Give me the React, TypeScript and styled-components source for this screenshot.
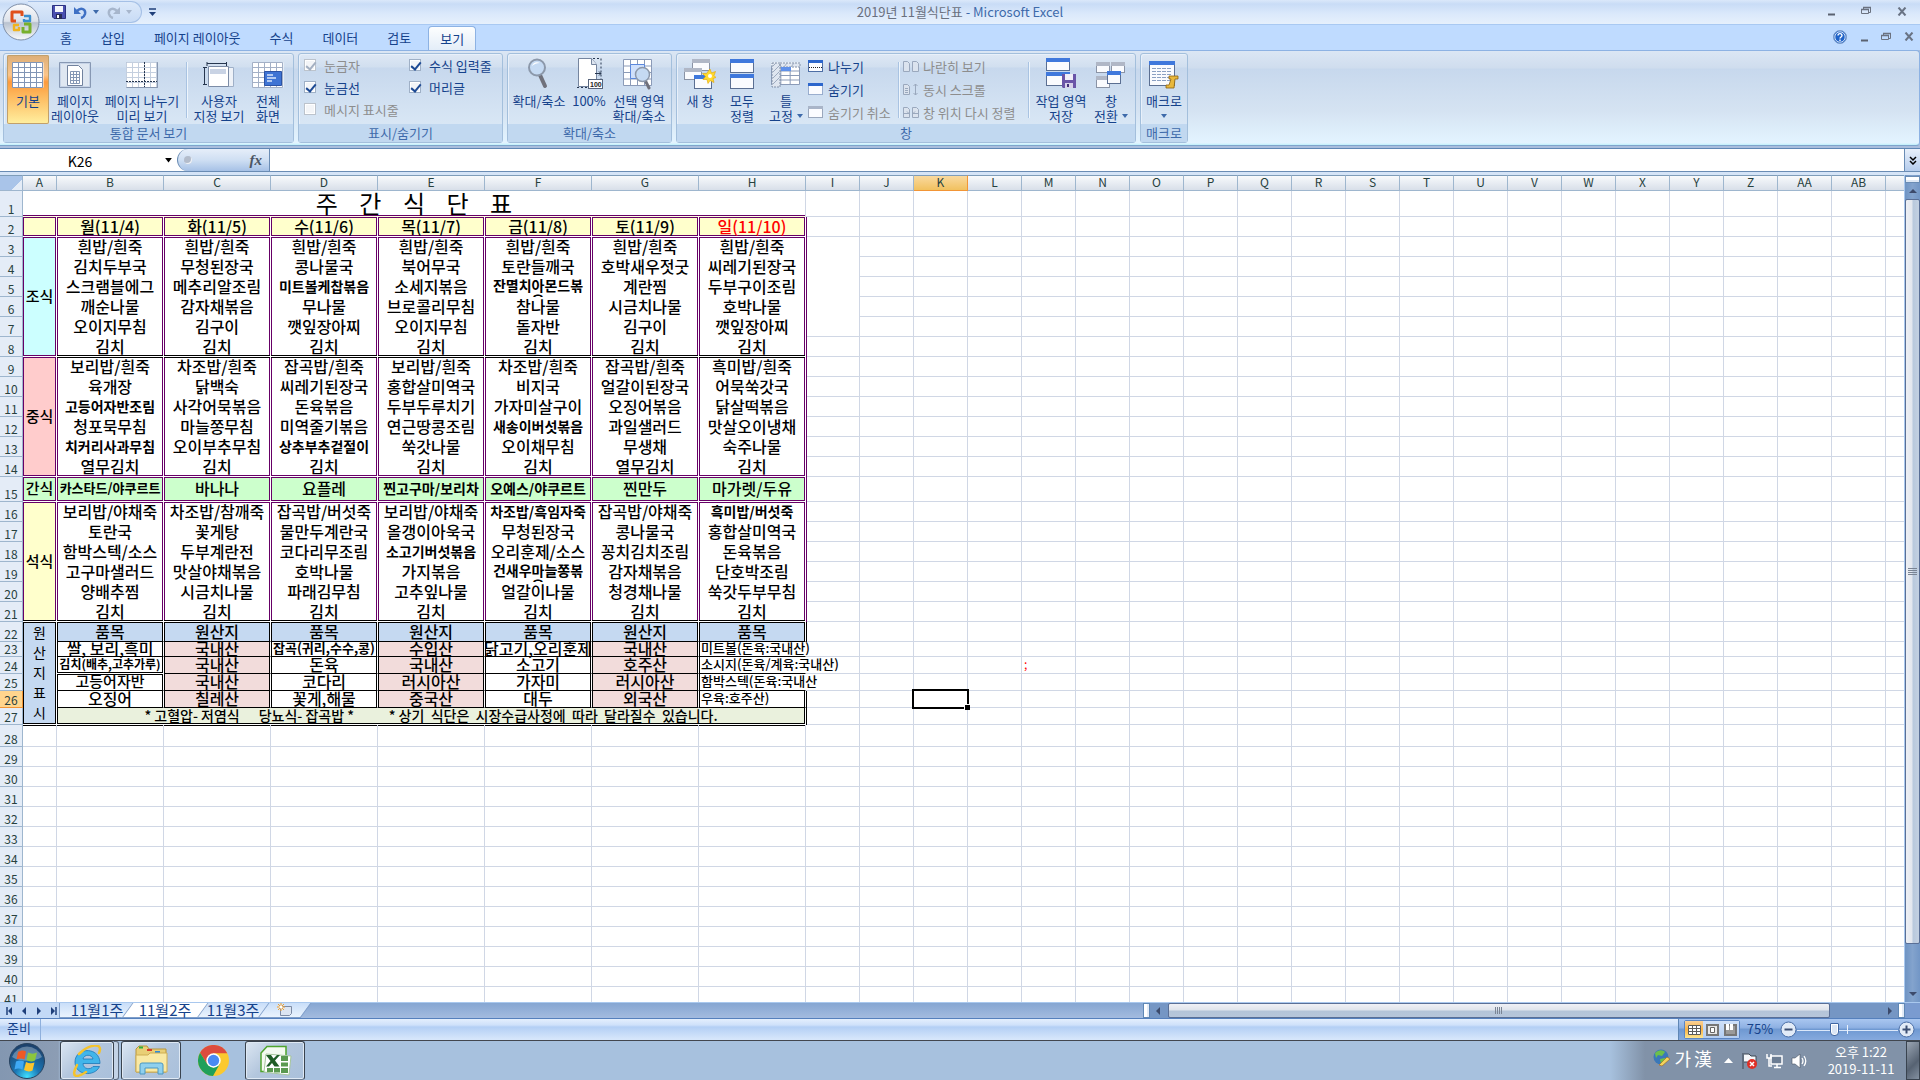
import React from "react";
import styled, { createGlobalStyle, css } from "styled-components";

const UI = '"Noto Sans CJK KR", "Noto Sans", sans-serif';
const PURPLE = "#660066";
const BLACK = "#000000";
const GRID = "#d0d7e5";

const Global = createGlobalStyle`
  * { box-sizing: border-box; }
  body { margin: 0; overflow: hidden; background: #fff; }
  button, input { font-family: inherit; font-size: inherit; color: inherit; margin: 0; padding: 0; border: 0; background: none; }
  svg { display: block; flex: none; }
`;

const Window = styled.div`
  display: flex;
  flex-direction: column;
  height: 100vh;
  font-family: ${UI};
  font-size: 13px;
  line-height: 15px;
  color: #15428b;
  position: relative;
`;

/* ---------- title bar ---------- */
const TitleBar = styled.header`
  flex: none;
  height: 25px;
  display: grid;
  grid-template-columns: 1fr auto 1fr;
  align-items: center;
  background: linear-gradient(#dbe8fa 0, #c9dcf6 4px, #dbe9fb 14px, #e6f0fc 24px);
  border-bottom: 1px solid #a9c9f2;
`;
const QuickAccess = styled.div`
  display: flex;
  align-items: center;
  padding-left: 28px;
`;
const QuickPill = styled.div`
  display: flex;
  align-items: center;
  gap: 8px;
  height: 22px;
  width: 114px;
  padding-left: 24px;
  border: 1px solid #a5c0e6;
  border-left: 0;
  border-radius: 0 11px 11px 0;
  background: linear-gradient(#dce9fa, #c8dbf5);
`;
const QuickButton = styled.button`
  display: flex;
  align-items: center;
  gap: 6px;
`;
const QuickMore = styled(QuickButton)`
  margin-left: 7px;
`;
const Title = styled.h1`
  margin: 0;
  font-size: 13px;
  font-weight: 400;
  line-height: 22px;
  color: #69707e;
  span { color: #3e6aaa; }
`;
const WindowButtons = styled.div<{ $gap: number; $end: number }>`
  display: flex;
  justify-content: flex-end;
  align-items: center;
  align-self: center;
  gap: ${(p) => p.$gap}px;
  padding-right: ${(p) => p.$end}px;
  padding-bottom: 2px;
  margin-left: auto;
`;
const OfficeButton = styled.button`
  position: absolute;
  left: 2px;
  top: 3px;
  width: 38px;
  height: 38px;
  z-index: 2;
`;

/* ---------- ribbon ---------- */
const TabBar = styled.nav`
  flex: none;
  height: 25px;
  display: flex;
  align-items: flex-end;
  padding-left: 45px;
  background: #bfdbff;
`;
const Tab = styled.button<{ $active?: boolean }>`
  height: 24px;
  padding: 0 12px;
  margin: 0 2px 0 3px;
  line-height: 22px;
  ${(p) =>
    p.$active &&
    css`
      background: linear-gradient(#fdfefe, #e3edf8);
      border: 1px solid #8db2e3;
      border-bottom: 0;
      border-radius: 4px 4px 0 0;
      padding: 0 11px;
    `}
`;
const Ribbon = styled.section`
  flex: none;
  height: 98px;
  padding-bottom: 2px;
  background: #a9bedd;
`;
const RibbonPanel = styled.div`
  display: flex;
  gap: 4px;
  height: 96px;
  padding: 2px 3px;
  border: 1px solid #8db2e3;
  border-left: 0;
  border-bottom-color: #7fa5cc;
  border-radius: 0 4px 4px 0;
  background: linear-gradient(#dbe6f4 0, #cfddee 17px, #c7d8ed 18px, #d5e3f2 60px, #e3f4ff 92px, #bdf0fa 94px);
`;
const Group = styled.section<{ $w: number }>`
  flex: none;
  width: ${(p) => p.$w}px;
  height: 90px;
  display: flex;
  flex-direction: column;
  border: 1px solid #a3bfdc;
  border-radius: 3px;
  background: linear-gradient(#dee8f5 0, #d1dfef 13px, #c7d8ed 14px, #d9e7f5 72px);
  box-shadow: inset 1px 1px #e8f0fa;
`;
const GroupBody = styled.div`
  flex: 1;
  display: flex;
  padding: 1px 3px 0;
`;
const GroupTitle = styled.h2`
  margin: 0;
  height: 18px;
  font-size: 13px;
  line-height: 18px;
  font-weight: 400;
  text-align: center;
  color: #3e6aaa;
  background: #c1d8f0;
`;
const BigButton = styled.button<{ $w: number; $active?: boolean }>`
  flex: none;
  width: ${(p) => p.$w}px;
  height: 69px;
  display: flex;
  flex-direction: column;
  align-items: center;
  white-space: nowrap;
  line-height: 15px;
  padding-top: 2px;
  ${(p) =>
    p.$active &&
    css`
      background: linear-gradient(#dcae78 0, #fbc58a 20px, #fd9a3c 27px, #fdb75c 40px, #fff0a0 69px);
      box-shadow: inset 0 0 0 1px #c2a06b;
      border-radius: 2px;
    `}
`;
const IconBox = styled.span`
  height: 36px;
  display: flex;
  align-items: center;
  justify-content: center;
`;
const Line = styled.span`
  display: flex;
  align-items: center;
  gap: 4px;
  min-height: 15px;
`;
const Divider = styled.span`
  flex: none;
  width: 2px;
  height: 56px;
  margin: 7px 3px 0;
  background: #a9c3e2;
  border-right: 1px solid #eef5fc;
`;
const CheckGrid = styled.div`
  display: grid;
  grid-template-columns: 105px auto;
  grid-auto-rows: 22px;
  align-content: start;
  padding: 0 2px;
`;
const CheckLabel = styled.label<{ $off?: boolean }>`
  display: flex;
  align-items: center;
  gap: 8px;
  height: 20px;
  white-space: nowrap;
  color: ${(p) => (p.$off ? "#8d8d8d" : "#15428b")};
`;
const CheckBox = styled.input`
  appearance: none;
  width: 12px;
  height: 12px;
  border: 1px solid #9fb0c6;
  background: #f3f5f8;
  box-shadow: inset 0 0 0 1px #ffffff;
  position: relative;
  &:checked::after {
    content: "";
    position: absolute;
    left: 3px;
    top: 0;
    width: 4px;
    height: 8px;
    border: solid #1d4a94;
    border-width: 0 2px 2px 0;
    transform: rotate(40deg);
  }
  &:disabled { border-color: #bcc3cc; }
  &:disabled::after { border-color: #a4b0c2; }
`;
const SmallStack = styled.div<{ $w: number }>`
  flex: none;
  width: ${(p) => p.$w}px;
  display: grid;
  grid-auto-rows: 23px;
  align-content: start;
`;
const SmallButton = styled.button<{ $off?: boolean }>`
  display: flex;
  align-items: center;
  gap: 4px;
  white-space: nowrap;
  color: ${(p) => (p.$off ? "#8d8d8d" : "#15428b")};
`;

/* ---------- formula bar ---------- */
const FormulaBar = styled.section`
  flex: none;
  height: 27px;
  display: flex;
  background: #fff;
  border-top: 1px solid #5f87b5;
  border-bottom: 3px solid #d5e4f7;
  box-shadow: inset 0 -1px #6a8cb4;
`;
const NameBox = styled.input`
  width: 160px;
  text-align: center;
  color: #000;
  font-size: 14px;
`;
const NameArrow = styled.button`
  width: 17px;
  display: flex;
  align-items: center;
  justify-content: center;
`;
const FxCapsule = styled.button`
  width: 93px;
  margin-bottom: 1px;
  display: flex;
  align-items: center;
  justify-content: space-between;
  padding: 0 7px 0 6px;
  border-left: 1px solid #6a8cb4;
  border-right: 1px solid #6a8cb4;
  border-radius: 12px 0 0 12px;
  background: linear-gradient(#e6eef9, #cfdff3 50%, #a6c1e6);
`;
const Dot = styled.span`
  width: 8px;
  height: 8px;
  border-radius: 50%;
  background: #b3bccb;
  box-shadow: inset -1px -1px #eef2f8;
`;
const Fx = styled.i`
  font-family: "Liberation Serif", serif;
  font-size: 15px;
  font-weight: 700;
  color: #4c5563;
`;
const FormulaInput = styled.input`
  flex: 1;
  min-width: 0;
`;
const ExpandButton = styled.button`
  width: 16px;
  margin-bottom: 1px;
  border-left: 1px solid #6a8cb4;
  background: linear-gradient(#e8f0fb, #b5ccec);
  display: flex;
  align-items: center;
  justify-content: center;
`;

/* ---------- sheet ---------- */
const Work = styled.main`
  flex: 1;
  min-height: 0;
  display: flex;
`;
const SheetView = styled.div`
  flex: 1;
  min-width: 0;
  overflow: hidden;
  background: #fff;
`;
const Sheet = styled.table`
  table-layout: fixed;
  width: 1px;
  border-collapse: separate;
  border-spacing: 0;
  color: #000;
`;
const ColHead = styled.th<{ $on?: boolean }>`
  height: 16px;
  padding: 0 0 2px;
  font-size: 12px;
  font-weight: 400;
  line-height: 12px;
  color: #27413e;
  background: ${(p) => (p.$on ? "linear-gradient(#f9d99f, #f1c15f)" : "linear-gradient(#f8fafc, #d8dfe9)")};
  border-top: 1px solid #7f9db9;
  border-right: 1px solid ${(p) => (p.$on ? "#f29536" : "#9eb6ce")};
  border-bottom: 1px solid ${(p) => (p.$on ? "#f29536" : "#9eb6ce")};
`;
const Corner = styled(ColHead)`
  background: linear-gradient(135deg, #a9c4e9 70%, #e4ecf7 71%);
`;
const RowHead = styled.th<{ $on?: boolean }>`
  padding: 0 0 1px;
  font-size: 12px;
  font-weight: 400;
  line-height: 13px;
  vertical-align: bottom;
  color: #27413e;
  background: ${(p) => (p.$on ? "#ffd58d" : "#e4ecf7")};
  border-right: 1px solid ${(p) => (p.$on ? "#f29536" : "#9eb6ce")};
  border-bottom: 1px solid ${(p) => (p.$on ? "#f29536" : "#9eb6ce")};
`;

type Edges = { t?: string; r?: string; b?: string; l?: string };
const shadow = (e: Edges = {}) =>
  [
    e.t && `inset 0 1px ${e.t}`,
    e.b && `inset 0 -1px ${e.b}`,
    e.l && `inset 1px 0 ${e.l}`,
    e.r && `inset -1px 0 ${e.r}`,
  ]
    .filter(Boolean)
    .join(",") || "none";

const Cell = styled.td<{ $edges?: Edges; $bg?: string; $right?: string; $bottom?: string; $rail?: string }>`
  padding: 0;
  position: relative;
  background: ${(p) => p.$bg || "transparent"};
  background-clip: padding-box;
  border-right: 1px solid ${(p) => p.$right || GRID};
  border-bottom: ${(p) => (p.$bottom === "none" ? "0" : `1px solid ${p.$bottom || GRID}`)};
  box-shadow: ${(p) => shadow(p.$edges)};
  ${(p) =>
    p.$rail &&
    css`
      &::before {
        content: "";
        position: absolute;
        top: 0;
        bottom: -1px;
        left: 0;
        width: 1px;
        background: ${p.$rail};
      }
    `}
`;
const CellText = styled.div<{ $h: number; $size?: number; $weight?: number; $color?: string; $kind?: "wrap" | "spill" | "clip" }>`
  height: ${(p) => p.$h}px;
  padding-bottom: 2px;
  display: flex;
  align-items: center;
  justify-content: center;
  white-space: pre;
  font-size: ${(p) => p.$size || 16}px;
  font-weight: ${(p) => p.$weight || 500};
  line-height: 14px;
  color: ${(p) => p.$color || "#000"};
  ${(p) => p.$kind === "clip" && css`overflow-x: clip;`}
  ${(p) =>
    p.$kind === "wrap" &&
    css`
      overflow: hidden;
      align-items: flex-start;
      white-space: normal;
      word-break: break-all;
      text-align: center;
      line-height: 15px;
      padding: 0 6px;
    `}
  ${(p) =>
    p.$kind === "spill" &&
    css`
      justify-content: flex-start;
      width: 0;
      padding-left: 2px;
    `}
`;
const SideText = styled.div<{ $size: number; $weight: number; $lh: number }>`
  padding-bottom: 2px;
  font-size: ${(p) => p.$size}px;
  font-weight: ${(p) => p.$weight};
  line-height: ${(p) => p.$lh}px;
  text-align: center;
  white-space: pre;
`;
const Selection = styled.div`
  position: absolute;
  inset: -2px;
  border: 2px solid #000;
  z-index: 1;
  &::after {
    content: "";
    position: absolute;
    right: -3px;
    bottom: -3px;
    width: 5px;
    height: 5px;
    background: #000;
    border: solid #fff;
    border-width: 1px 0 0 1px;
  }
`;

/* ---------- scroll bars ---------- */
const VScroll = styled.aside`
  flex: none;
  width: 16px;
  display: flex;
  flex-direction: column;
  background: linear-gradient(90deg, #6f94c4, #83a3cd 50%, #7296c6);
  border-left: 1px solid #a9c8ee;
`;
const SplitV = styled.span`
  height: 7px;
  margin-top: 1px;
  background: #fff;
  border: 1px solid #6a8cb4;
  box-shadow: inset 0 -2px #dfe9f6;
`;
const ArrowButton = styled.button`
  flex: none;
  width: 16px;
  height: 16px;
  display: flex;
  align-items: center;
  justify-content: center;
`;
const VTrack = styled.div`
  flex: 1;
  display: grid;
  grid-template-rows: 742fr 42fr;
`;
const VThumb = styled.div`
  border: 1px solid #5a6f96;
  border-radius: 2px;
  background: linear-gradient(90deg, #eef0f4, #e2e6ee 48%, #b8c8dc 52%, #c4d1e2);
  display: flex;
  align-items: center;
  justify-content: center;
`;
const SheetBar = styled.footer`
  flex: none;
  height: 16px;
  display: flex;
  background: linear-gradient(#86a6d2, #a3bbdf);
  border-top: 1px solid #a9c8ee;
`;
const NavArrows = styled.div`
  width: 63px;
  display: flex;
  align-items: center;
  justify-content: space-around;
  padding: 0 3px;
  background: #c3d9f6;
`;
const SheetTabs = styled.div`
  display: flex;
`;
const SheetTab = styled.button<{ $active?: boolean; $w: number }>`
  position: relative;
  width: ${(p) => p.$w}px;
  height: 15px;
  padding-bottom: 2px;
  font-size: 15px;
  line-height: 13px;
  color: #15428b;
  display: flex;
  align-items: center;
  justify-content: center;
  z-index: ${(p) => (p.$active ? 1 : 0)};
  isolation: isolate;
  &::before {
    content: "";
    position: absolute;
    inset: 0 -4px 0 -4px;
    z-index: -1;
    transform: skewX(-36deg);
    background: ${(p) => (p.$active ? "#fff" : "linear-gradient(#c9def9, #eaf3fd)")};
    border: solid #7f9ec9;
    border-width: 0 1px 1px 1px;
  }
  &:first-child::before { transform: none; }
`;
const HScroll = styled.div`
  margin-left: auto;
  width: 762px;
  display: flex;
  background: #7596c4;
`;
const SplitH = styled.span`
  width: 7px;
  border: 1px solid #5f87b5;
  background: #fff;
  box-shadow: inset -2px 0 #e3ebf7;
`;
const HTrack = styled.div`
  flex: 1;
  display: grid;
  grid-template-columns: 660fr 52fr;
  padding-left: 2px;
`;
const HThumb = styled.div`
  border: 1px solid #5a6f96;
  border-radius: 2px;
  background: linear-gradient(#f0f1f5, #dfe4ec 45%, #b4c4d8 55%, #b7c6da);
  display: flex;
  align-items: center;
  justify-content: center;
`;
const BarEnd = styled.span`
  width: 15px;
  background: #7a9bd0;
`;

/* ---------- status bar ---------- */
const StatusBar = styled.footer`
  flex: none;
  height: 22px;
  display: flex;
  align-items: stretch;
  border-top: 1px solid #5580bd;
  background: linear-gradient(#e4effd 0, #cfe1fa 6px, #b3cff5 8px, #d6e6fb 20px);
`;
const Ready = styled.span`
  width: 41px;
  padding-left: 7px;
  line-height: 18px;
  border-right: 1px solid #8fb0dd;
`;
const StatusTools = styled.div`
  margin-left: auto;
  display: flex;
  align-items: center;
  width: 242px;
  padding-left: 5px;
  border-left: 1px solid #5f87b5;
  background: linear-gradient(#a9c6f0, #8fb1e3 40%, #6f99d2 50%, #86aade);
`;
const Views = styled.div`
  display: flex;
  border: 1px solid #5c86c4;
  border-radius: 2px;
`;
const ViewButton = styled.button<{ $on?: boolean }>`
  width: 18px;
  height: 17px;
  display: flex;
  align-items: center;
  justify-content: center;
  background: ${(p) => (p.$on ? "linear-gradient(#f9d199, #fbb344 50%, #fde58f)" : "linear-gradient(#cfe0f8, #b4cef2)")};
`;
const Percent = styled.span`
  width: 40px;
  padding-bottom: 2px;
  text-align: center;
  font-size: 13px;
`;
const ZoomButton = styled.button`
  flex: none;
  width: 17px;
  height: 17px;
`;
const ZoomRange = styled.input`
  appearance: none;
  flex: none;
  width: 101px;
  height: 16px;
  background: linear-gradient(#e9f1fc, #e9f1fc) 50% 3px / 1px 9px no-repeat, linear-gradient(#dbe8fa, #dbe8fa) 0 8px / 100% 1px no-repeat;
  &::-webkit-slider-thumb {
    appearance: none;
    width: 9px;
    height: 13px;
    background: #dbe6f5;
    border: 1px solid #3f66a3;
    border-radius: 1px 1px 4px 4px;
    box-shadow: inset 0 0 0 1px #fff;
  }
`;

/* ---------- task bar ---------- */
const TaskBar = styled.footer`
  flex: none;
  height: 40px;
  display: flex;
  align-items: stretch;
  border-top: 1px solid #42474f;
  background: linear-gradient(90deg, #8397b1, #8c9db4 58px, #a7c1de 62px, #a7c1de calc(100% - 310px), #8192a8 calc(100% - 275px));
`;
const TaskButton = styled.button<{ $w: number; $open?: boolean; $gap?: number }>`
  width: ${(p) => p.$w}px;
  margin-left: ${(p) => p.$gap || 0}px;
  display: flex;
  align-items: center;
  justify-content: center;
  ${(p) =>
    p.$open &&
    css`
      border: 1px solid #39434f;
      border-bottom-color: #6e7f95;
      border-radius: 3px;
      background: linear-gradient(135deg, #dbe6f2, #b3c6dd 45%, #a9c0db);
      box-shadow: inset 0 0 0 1px #dfe9f4;
    `}
`;
const StackEdge = styled.span`
  width: 5px;
  border: 1px solid #5c6a7c;
  border-left: 0;
  border-radius: 0 3px 3px 0;
  background: #c3d3e6;
`;
const Tray = styled.div`
  margin-left: auto;
  display: flex;
  align-items: center;
  gap: 8px;
  color: #fff;
`;
const Ime = styled.span`
  display: flex;
  align-items: center;
  gap: 3px;
  font-size: 18px;
  padding-right: 4px;
  padding-bottom: 5px;
`;
const Clock = styled.time`
  width: 90px;
  text-align: center;
  font-size: 13px;
  line-height: 17px;
  padding-bottom: 1px;
`;
const ShowDesktop = styled.button`
  width: 14px;
  align-self: stretch;
  margin-left: -8px;
  border: 1px solid #39434f;
  background: linear-gradient(135deg, #9aa5b3, #566272 60%, #8491a1);
`;

/* ---------- icons ---------- */
const Caret = ({ c = "#3e6aaa", w = 6 }: { c?: string; w?: number }) => (
  <svg width={w} height={w / 2 + 1} viewBox="0 0 6 4"><path d="M0 0h6L3 4z" fill={c} /></svg>
);
const Tri = ({ dir, c = "#1f3f7a", bar }: { dir: number; c?: string; bar?: boolean }) => (
  <svg width="8" height="8" viewBox="0 0 8 8">
    <g transform={`rotate(${dir} 4 4)`}><path d="M2 0v8l4-4z" fill={c} />{bar && <path d="M7 0v8" stroke={c} strokeWidth="1.5" />}</g>
  </svg>
);
const MinIcon = () => <svg width="8" height="10"><path d="M1 8.5h7" stroke="#5b6270" strokeWidth="2" /></svg>;
const RestoreIcon = () => (
  <svg width="10" height="10" fill="none" stroke="#6b7280"><path d="M2.5 3V1.5h7v5H8" /><path d="M.5 3.5h7v4h-7z" /><path d="M2 1.5h8M0 3.5h8" strokeWidth="1.5" /></svg>
);
const CloseIcon = () => <svg width="10" height="9"><path d="M1.500 .5l7 8M8.500 .5l-7 8" stroke="#697384" strokeWidth="2" /></svg>;

const OfficeLogo = () => (
  <svg width="38" height="38" viewBox="0 0 38 38">
    <defs>
      <linearGradient id="orb" x1="0" y1="0" x2="0" y2="1">
        <stop offset="0" stopColor="#fafbfd" /><stop offset=".48" stopColor="#dde2ea" /><stop offset=".52" stopColor="#b9c2cf" /><stop offset="1" stopColor="#f8fafc" />
      </linearGradient>
    </defs>
    <circle cx="19" cy="19" r="18" fill="url(#orb)" stroke="#7f8fa8" />
    <g fill="none" strokeWidth="3" strokeLinejoin="round">
      <path d="M16 9h-6v9h4M13 9h7v4" stroke="#e0501c" />
      <path d="M22 13h6v5h-4M22 16v2h2" stroke="#3a8fd0" strokeWidth="2.400" />
      <path d="M17 22h-5v5h5v-3" stroke="#f0b31e" strokeWidth="2.400" />
      <path d="M22 21h6v8h-7v-5" stroke="#78b02c" />
    </g>
  </svg>
);
const SaveIcon = () => (
  <svg width="14" height="14"><path d="M.5 .5h13v13H2L.5 12z" fill="#4a4fb0" stroke="#2c3182" /><path d="M3 1h8v6H3z" fill="#f3f5fb" /><path d="M4 9h6v5H4z" fill="#262a55" /><path d="M5 10h2v3H5z" fill="#fff" /></svg>
);
const UndoIcon = ({ off }: { off?: boolean }) => (
  <svg width="13" height="13" viewBox="0 0 13 13">
    <g transform={off ? "translate(13 0) scale(-1 1)" : undefined}>
      <path d="M3 5c4-4 9-2 8 3-.5 2-2 3.500-4 4" fill="none" stroke={off ? "#a7b6cc" : "#3f70c4"} strokeWidth="2.500" />
      <path d="M0 1v7h7z" fill={off ? "#a7b6cc" : "#3f70c4"} />
    </g>
  </svg>
);
const HelpIcon = () => (
  <svg width="14" height="14"><circle cx="7" cy="7" r="6.500" fill="#1e62c8" stroke="#7d9dc9" /><circle cx="7" cy="7" r="5.200" fill="none" stroke="#fff" strokeWidth=".8" /><path d="M5 5.500c0-2.500 4-2.500 4 0C9 7 7 7 7 8.500M7 9.500v1.500" stroke="#fff" strokeWidth="1.400" fill="none" /></svg>
);
const lines = (x0: number, y0: number, x1: number, y1: number, sx: number, sy: number) => {
  let d = "";
  for (let x = x0; x <= x1; x += sx) d += `M${x} ${y0}V${y1}`;
  for (let y = y0; y <= y1; y += sy) d += `M${x0} ${y}H${x1}`;
  return d;
};
const NormalIcon = () => (
  <svg width="32" height="27"><path d="M.5 .5h31v25H.5z" fill="#fff" /><path d={lines(0.5, 0.5, 30.5, 25.5, 6, 5)} stroke="#8195b5" fill="none" /></svg>
);
const PageLayoutIcon = () => (
  <svg width="32" height="27"><path d="M.5 .5h31v25H.5z" fill="#c6d3e6" stroke="#8798b3" /><path d="M2 2h28v22H2z" fill="#dfe7f1" /><path d="M8.500 3.500h11l4 4v16h-15z" fill="#fff" stroke="#71829e" /><path d={lines(11.5, 9.5, 20.5, 21.5, 3, 3)} stroke="#8497b4" fill="none" /></svg>
);
const PageBreakIcon = () => (
  <svg width="32" height="27"><path d="M.5 .5h31v25H.5z" fill="#fff" stroke="#8797b0" /><path d={lines(0.5, 0.5, 30.5, 25.5, 6, 5)} stroke="#c4cfdf" fill="none" /><path d="M18.500 0v26M0 19.500h32" stroke="#26364f" strokeDasharray="2 1" /><path d="M.5 25.500h31v-25" stroke="#8797b0" fill="none" /></svg>
);
const CustomIcon = () => (
  <svg width="32" height="27"><path d="M8.500 5.500h22v19h-22z" fill="#eef2f8" stroke="#9fb0c8" /><path d="M5.500 4.500h20v20h-20z" fill="#fff" stroke="#7c8ca6" /><path d="M7 7h16v5H7z" fill="#c9d3e4" /><path d="M4 1.500h20M4 0v4M23.500 0v4M1.500 5v18M0 5.500h4M0 22.500h4" stroke="#26364f" fill="none" /></svg>
);
const FullIcon = () => (
  <svg width="32" height="27"><path d="M.5 .5h31v25H.5z" fill="#fff" /><path d={lines(0.5, 0.5, 30.5, 25.5, 6, 5)} stroke="#a3b0c6" fill="none" /><path d="M12.500 9.500h17v14h-17z" fill="#3f74d4" stroke="#2c53a5" /><path d="M15 13h6M15 16h9M15 19h5" stroke="#dce8fb" strokeWidth="1.500" /></svg>
);
const Lens = () => (
  <svg width="24" height="34" viewBox="0 0 24 34"><path d="M13 17l5 11" stroke="#70717b" strokeWidth="4" strokeLinecap="round" /><circle cx="10" cy="9.500" r="8" fill="#c5daf3" stroke="#8c98aa" strokeWidth="2" /><path d="M5 8c1-3 4-5 8-3-3 0-6 1-8 3z" fill="#fff" /></svg>
);
const HundredIcon = () => (
  <svg width="27" height="34"><path d="M2.500 .5h13l5 6v22h-18z" fill="#fff" stroke="#75859f" /><path d="M15.500 .5v6h5" fill="#dde5f0" stroke="#75859f" /><path d="M17 .5h8v27M1 29.500h12" stroke="#26364f" strokeDasharray="2 2" fill="none" /><path d="M19 15.500h6l-2-2m2 2l-2 2" stroke="#26364f" fill="none" /><rect x="12.500" y="21.500" width="14" height="9" fill="#fff" stroke="#56647c" /><text x="14" y="29" fontSize="7" fontWeight="700" fontFamily="Liberation Sans, sans-serif" fill="#222">100</text></svg>
);
const SelZoomIcon = () => (
  <svg width="32" height="33"><path d="M.5 .5h28v26H.5z" fill="#fff" /><path d={lines(0.5, 0.5, 28.5, 26.5, 7, 6.5)} stroke="#8b9bb8" fill="none" /><path d="M7.500 5.500h14v14h-14z" fill="#cfe0fb" stroke="#5b88dd" /><path d="M22 21l4 8" stroke="#70717b" strokeWidth="3" strokeLinecap="round" /><circle cx="19.500" cy="15.500" r="7" fill="#c5daf3" stroke="#8c98aa" strokeWidth="1.500" /></svg>
);
const Win = ({ x, y, w, h, off }: { x: number; y: number; w: number; h: number; off?: boolean }) => (
  <g><rect x={x + 0.5} y={y + 0.5} width={w} height={h} fill="#fafbfe" stroke={off ? "#8a93a5" : "#5b6f92"} /><rect x={x} y={y} width={w + 1} height="4" fill={off ? "#b0b7c6" : "#3f78dc"} /></g>
);
const NewWinIcon = () => (
  <svg width="32" height="33"><Win x={8} y={0} w={17} h={11} off /><Win x={0} y={9} w={17} h={11} off /><Win x={10} y={16} w={17} h={13} /><path d="M26 10l1.500 4 4-1.500-1.500 4 2 2-3 1 1 4-4-2-2 3-1-4-4 0 2.500-3-3-3 4 0z" fill="#ffd92e" stroke="#e3a500" strokeWidth=".6" /><circle cx="26" cy="17" r="2" fill="#fff" /></svg>
);
const ArrangeIcon = () => <svg width="25" height="33"><Win x={0} y={0} w={23} h={13} /><Win x={0} y={15} w={23} h={14} /></svg>;
const FreezeIcon = () => (
  <svg width="30" height="27"><path d="M.5 .5h28v22H.5z" fill="#fff" /><path d={lines(0.5, 4.5, 28.5, 22.5, 9.33, 4.5)} stroke="#8b9bb8" fill="none" /><path d="M1 1h8v24H1zM9 1h20v4H9z" fill="#dfe6f0" stroke="#8090a8" strokeDasharray="2 1" /><path d="M10 5h10v4H10z" fill="#5e90ea" /><path d="M2 4l3-3M2 10l6-6M2 16l6-6M2 22l6-6M13 5l3-4M20 5l3-4" stroke="#9dabc0" /></svg>
);
const SaveAreaIcon = () => (
  <svg width="31" height="34"><Win x={0} y={0} w={23} h={12} /><Win x={0} y={14} w={23} h={13} /><path d="M16 16h14v14H17l-1-1z" fill="#6a55a8" /><path d="M19 16h8v6h-8z" fill="#f1eef8" /><path d="M19 25h8v5h-8z" fill="#d8d2ea" /><path d="M21 26h2v3h-2z" fill="#41307a" /></svg>
);
const SwitchIcon = () => (
  <svg width="30" height="27"><Win x={0} y={0} w={13} h={10} off /><Win x={15} y={0} w={13} h={10} off /><Win x={0} y={14} w={13} h={11} off /><Win x={11} y={9} w={13} h={12} /></svg>
);
const MacroIcon = () => (
  <svg width="30" height="29"><Win x={0} y={0} w={25} h={24} /><path d="M3 7.500h19M3 10.500h19M3 13.500h19M3 16.500h19M3 19.500h19" stroke="#8ba0c2" strokeDasharray="4 1" /><path d="M20 15h9v3h-3l-1 9h-8v-3h3l2-6h-2z" fill="#e8b83c" stroke="#8d6310" strokeWidth=".8" /></svg>
);
const MiniWin = ({ kind }: { kind: "split" | "hide" | "off" }) => (
  <svg width="16" height="13"><rect x=".5" y=".5" width="14" height="11" fill="#fbfcff" stroke={kind === "off" ? "#9aa7bc" : "#4e6ea5"} strokeDasharray={kind === "hide" ? "1 1" : undefined} /><rect width="15" height="3" fill={kind === "off" ? "#a9b5c8" : "#2c66cc"} />{kind === "split" && <path d="M1 7.500h13" stroke="#222" strokeDasharray="1 1" />}</svg>
);
const PairIcon = ({ kind }: { kind: "pair" | "sync" | "reset" }) => (
  <svg width="16" height="13" fill="#dbe3ee" stroke="#9aa8bd">
    <path d="M.5 1.500h4l2 2v8h-6z" />
    {kind !== "sync" ? <path d="M9.500 1.500h4l2 2v8h-6z" /> : <path d="M12.500 1v11M10.500 3l2-2 2 2M10.500 10l2 2 2-2" fill="none" />}
    {kind === "sync" && <path d="M2 5.500h3M2 7.500h3M2 9.500h3" />}
    {kind === "reset" && <path d="M1 7.500h5l-2-2M15 7.500h-5l2-2" fill="none" />}
  </svg>
);
const NewSheetIcon = () => (
  <svg width="16" height="13"><path d="M3.500 3.500h11v7l-2 2h-9z" fill="#dce5f2" stroke="#7d8ba5" /><path d="M4 0v8M0 4h8M1 1l6 6M7 1L1 7" stroke="#f2a02a" /><circle cx="4" cy="4" r="1.500" fill="#fff" /></svg>
);
const StartOrb = () => (
  <svg width="38" height="38" viewBox="0 0 38 38">
    <defs><radialGradient id="start" cx=".5" cy=".95" r=".9"><stop offset="0" stopColor="#40e0ff" /><stop offset=".4" stopColor="#1b76b4" /><stop offset="1" stopColor="#1c416c" /></radialGradient></defs>
    <circle cx="19" cy="19" r="17.500" fill="url(#start)" stroke="#27425f" />
    <path d="M4 15a16 16 0 0 1 30 0c-8 5-22 5-30 0z" fill="#fff" opacity=".3" />
    <path d="M10 10c3-2 6-2 8-.5l-1.500 8c-3-1.500-5-1.500-8 0z" fill="#ee5a24" />
    <path d="M20 10.500c3 1.500 6 1.500 9 0l-2 8c-3 1.500-6 1-8.500-.5z" fill="#8cc63e" />
    <path d="M8 19.500c3-1.500 5-1.500 8 0l-1.500 8c-3-1.500-5-1.500-8 0z" fill="#3fa9f5" />
    <path d="M18 20c3 1.500 5.500 1.500 8.500.5l-2 8c-3 1.500-5.500 1-8.500-.5z" fill="#fcc52c" />
  </svg>
);
const IeIcon = () => (
  <svg width="32" height="32" viewBox="0 0 32 32">
    <path d="M29 18.500H12c0 6 8 6.500 10 3h6.500C24 32 4 31 4 17 4 2 29 1 29 18.500zM12 14h10c-1-5-9-5-10 0z" fill="#41b5ea" stroke="#1c77b8" strokeWidth=".8" />
    <path d="M6 20C-1 33 6 33 15 27M8 9C18-1 33-3 28 8" fill="none" stroke="#f5c32c" strokeWidth="2.500" strokeLinecap="round" />
  </svg>
);
const FolderIcon = () => (
  <svg width="33" height="31" viewBox="0 0 33 31"><path d="M1 4l3-3h8l2 3h17v23H1z" fill="#e9cf76" stroke="#b8953a" /><path d="M4 2.500h4" stroke="#2fae3c" strokeWidth="2" /><path d="M12 5h5" stroke="#d83a2b" strokeWidth="2" /><path d="M20 7h5" stroke="#2f8bd8" strokeWidth="2" /><path d="M1 10h12l2-2h17v19H1z" fill="#f9e9a4" stroke="#cfae54" /><path d="M5 29v-9q0-2 2-2h19q2 0 2 2v9h-5v-6H10v6z" fill="#8fd0ee" stroke="#4a97c2" /></svg>
);
const ChromeIcon = () => (
  <svg width="31" height="31" viewBox="-15 -15 30 30"><circle r="15" fill="#fbc92f" /><path d="M0-7H13.300A15 15 0 0 0-13-7.500L-6.100 3.500z" fill="#dd4b3e" /><path d="M-13-7.500A15 15 0 0 0-.5 15L6.100 3.500 0 7-6.100 3.500z" fill="#1fa05a" /><circle r="7" fill="#fff" /><circle r="5.500" fill="#4a8af4" /></svg>
);
const ExcelIcon = () => (
  <svg width="33" height="32" viewBox="0 0 33 32"><path d="M8 1.500h19v25H2V8z" fill="#f4faf0" stroke="#4fa52e" strokeWidth="1.500" /><path d="M7 9l25 2-2 19-25-3z" fill="#fff" stroke="#a6c69c" /><path d="M22 11h7v5h-7zM22 17.500h7v4h-7zM8 23h6v4H8zM15 23h6v4.500h-6zM22 23h7v5h-7z" fill="#5a9950" /><path d="M7 10h5l2.500 3.500L18 10h3l-5 5.500 4.500 6h-5L13 18l-3 3.500H7l4.500-5.500z" fill="#1f5c26" /></svg>
);
const GlobeIcon = () => (
  <svg width="18" height="18"><circle cx="8" cy="8" r="7.500" fill="#3a78b8" /><path d="M2 4c4-4 8-3 10-1l-3 4-4-1-2 3zM7 10l5-1 1 3-5 3z" fill="#6cc04a" /><path d="M6 16l8-8 3 2-8 7z" fill="#f3d45c" stroke="#a3621d" strokeWidth=".6" /></svg>
);
const FlagIcon = () => (
  <svg width="17" height="18"><path d="M2 1v16M3 2h5l2 2h5v8H9L8 10H3" fill="#f5f7fa" stroke="#3d4653" /><circle cx="11" cy="12" r="5" fill="#e02f25" /><path d="M9 10l4 4M13 10l-4 4" stroke="#fff" strokeWidth="1.500" /></svg>
);
const NetIcon = () => (
  <svg width="17" height="18" fill="#6c7d93" stroke="#fff" strokeWidth="1.500"><path d="M5 4h11v8H5zM8 15.500h7M11 12v3" /><path d="M1 2v4h4V2M3 6v8h3" fill="none" /></svg>
);
const SoundIcon = () => (
  <svg width="17" height="18"><path d="M1 6h3l5-4v14l-5-4H1z" fill="#fff" stroke="#4a5563" strokeWidth=".6" /><path d="M11 6q2 3 0 6M13 4q3.500 5 0 10" stroke="#fff" fill="none" strokeWidth="1.300" /></svg>
);
const Circle = ({ plus }: { plus?: boolean }) => (
  <svg width="17" height="17"><circle cx="8.500" cy="8.500" r="7.500" fill="#e2ebf7" stroke="#4a6ea6" /><path d="M4.500 8.500h8" stroke="#3c4f73" strokeWidth="2" />{plus && <path d="M8.500 4.500v8" stroke="#3c4f73" strokeWidth="2" />}</svg>
);
const Grip = ({ v }: { v?: boolean }) => (
  <svg width="9" height="9"><path d={v ? "M0 1.500h9M0 3.500h9M0 5.500h9M0 7.500h9" : "M1.500 1v7M3.500 1v7M5.500 1v7M7.500 1v7"} stroke="#7a8494" /></svg>
);

/* ---------- data ---------- */
const COLS = ["A", "B", "C", "D", "E", "F", "G", "H", "I", "J", "K", "L", "M", "N", "O", "P", "Q", "R", "S", "T", "U", "V", "W", "X", "Y", "Z", "AA", "AB", ""];
const colWidth = (i: number) => (i === 0 ? 34 : i < 8 ? 107 : 54);
const rowHeight = (r: number) => {
  if (r === 1) return 26;
  if (r === 15) return 25;
  if (r === 23) return 15;
  if (r >= 24 && r <= 27) return 17;
  if (r === 28) return 22;
  return 20;
};

/* a trailing ~NN sets the font size, a trailing ^ wraps the text in its cell */
const MENU: Record<number, string[]> = {
  2: ["월(11/4)", "화(11/5)", "수(11/6)", "목(11/7)", "금(11/8)", "토(11/9)", "일(11/10)"],
  3: Array(7).fill("흰밥/흰죽"),
  4: ["김치두부국", "무청된장국", "콩나물국", "북어무국", "토란들깨국", "호박새우젓굿", "씨레기된장국"],
  5: ["스크램블에그", "메추리알조림", "미트볼케찹볶음~14", "소세지볶음", "잔멸치아몬드볶음^", "계란찜", "두부구이조림"],
  6: ["깨순나물", "감자채볶음", "무나물", "브로콜리무침", "참나물", "시금치나물", "호박나물"],
  7: ["오이지무침", "김구이", "깻잎장아찌", "오이지무침", "돌자반", "김구이", "깻잎장아찌"],
  8: Array(7).fill("김치"),
  9: ["보리밥/흰죽", "차조밥/흰죽", "잡곡밥/흰죽", "보리밥/흰죽", "차조밥/흰죽", "잡곡밥/흰죽", "흑미밥/흰죽"],
  10: ["육개장", "닭백숙", "씨레기된장국", "홍합살미역국", "비지국", "얼갈이된장국", "어묵쑥갓국"],
  11: ["고등어자반조림~14", "사각어묵볶음", "돈육볶음", "두부두루치기", "가자미살구이", "오징어볶음", "닭살떡볶음"],
  12: ["청포묵무침", "마늘쫑무침", "미역줄기볶음", "연근땅콩조림", "새송이버섯볶음~14", "과일샐러드", "맛살오이냉채"],
  13: ["치커리사과무침~14", "오이부추무침", "상추부추겉절이~14", "쑥갓나물", "오이채무침", "무생채", "숙주나물"],
  14: ["열무김치", "김치", "김치", "김치", "김치", "열무김치", "김치"],
  15: ["카스타드/야쿠르트~13", "바나나", "요플레", "찐고구마/보리차~14", "오예스/야쿠르트~14", "찐만두", "마가렛/두유"],
  16: ["보리밥/야채죽", "차조밥/참깨죽", "잡곡밥/버섯죽", "보리밥/야채죽", "차조밥/흑임자죽~14", "잡곡밥/야채죽", "흑미밥/버섯죽~14"],
  17: ["토란국", "꽃게탕", "물만두계란국", "올갱이아욱국", "무청된장국", "콩나물국", "홍합살미역국"],
  18: ["함박스텍/소스", "두부계란전", "코다리무조림", "소고기버섯볶음~14", "오리훈제/소스", "꽁치김치조림", "돈육볶음"],
  19: ["고구마샐러드", "맛살야채볶음", "호박나물", "가지볶음", "건새우마늘쫑볶음^", "감자채볶음", "단호박조림"],
  20: ["양배추찜", "시금치나물", "파래김무침", "고추잎나물", "얼갈이나물", "청경채나물", "쑥갓두부무침"],
  21: Array(7).fill("김치"),
  22: ["품목", "원산지", "품목", "원산지", "품목", "원산지", "품목"],
  23: ["쌀, 보리,흑미", "국내산", "잡곡(귀리,수수,콩)~13", "수입산", "닭고기,오리훈제", "국내산", "미트볼(돈육:국내산)"],
  24: ["김치(배추,고추가루)~12", "국내산", "돈육", "국내산", "소고기", "호주산", "소시지(돈육/계육:국내산)"],
  25: ["고등어자반~15", "국내산", "코다리", "러시아산", "가자미", "러시아산", "함박스텍(돈육:국내산"],
  26: ["오징어", "칠레산", "꽃게,해물", "중국산", "대두", "외국산", "우육:호주산)"],
};
const SIDE: Record<number, { text: string; span: number; bg: string }> = {
  2: { text: "", span: 1, bg: "#ffffcc" },
  3: { text: "조식", span: 6, bg: "#ccffff" },
  9: { text: "중식", span: 6, bg: "#ffcccc" },
  15: { text: "간식", span: 1, bg: "#ccffcc" },
  16: { text: "석식", span: 6, bg: "#ffffcc" },
  22: { text: "원\n산\n지\n표\n시", span: 6, bg: "#c5d9f1" },
};

const sideCell = (r: number) => {
  const s = SIDE[r];
  if (!s) return null;
  const c = r === 22 ? BLACK : PURPLE;
  return (
    <Cell key="A" rowSpan={s.span} $bg={s.bg} $right="#fff" $bottom="#fff" $edges={{ t: c, r: c, b: r === 16 ? BLACK : c, l: c }}>
      <SideText $size={r === 22 ? 14 : 15} $weight={r === 22 ? 400 : 500} $lh={r === 22 ? 20 : 18}>{s.text}</SideText>
    </Cell>
  );
};

const menuCell = (r: number, i: number) => {
  const raw = MENU[r][i];
  const wrap = raw.endsWith("^");
  const [text, size] = raw.replace("^", "").split("~");
  const origin = r >= 22;
  const last = i === 6;
  const spill = r >= 23 && last;
  const line = origin ? BLACK : PURPLE;
  const edges: Edges = { l: line, r: line };
  const closesBlock = r === 2 || r === 8 || r === 14 || r === 15 || r === 21;
  let bottom = closesBlock ? "#ffffff" : "none";
  if (r === 2 || r === 15) { edges.t = PURPLE; edges.b = PURPLE; }
  if (r === 3 || r === 16) edges.t = PURPLE;
  if (r === 8 || r === 21) edges.b = BLACK;
  if (r === 9 || r === 22) edges.t = BLACK;
  if (r === 14) edges.b = PURPLE;
  if (origin) bottom = BLACK;
  if (r === 24 && i === 0) { edges.b = BLACK; bottom = "#fff"; }
  if (r === 25 && i === 0) edges.t = BLACK;
  let right = "#ffffff";
  if (spill && r < 26) { delete edges.r; right = "transparent"; }
  let bg: string | undefined;
  if (r === 2) bg = "#ffffcc";
  else if (r === 15) bg = "#ccffcc";
  else if (r === 22) bg = "#c5d9f1";
  else if (origin && i % 2 === 1) bg = "#f2dcdb";
  const kind = wrap ? "wrap" : spill ? "spill" : text.length > 7 && !size ? "clip" : undefined;
  return (
    <Cell key={i} $edges={edges} $right={right} $bottom={bottom} $bg={bg}>
      <CellText
        $h={rowHeight(r) - 1}
        $size={spill ? 13 : size ? Number(size) : wrap ? 14 : 16}
        $weight={(size && size !== "15") || wrap ? 700 : 500}
        $color={r === 2 && last ? "#ff0000" : undefined}
        $kind={kind}
      >
        {text}
      </CellText>
    </Cell>
  );
};

const plainCell = (r: number, i: number) => {
  if (i === 8 && r > 3 && r < 8) return null;
  const edges: Edges = {};
  let rail: string | undefined;
  if (i === 8 && r >= 2 && r <= 21) rail = PURPLE;
  if (i === 8 && (r === 22 || r === 26 || r === 27)) rail = BLACK;
  if (r === 28 && i < 8) edges.t = BLACK;
  return (
    <Cell key={i} rowSpan={i === 8 && r === 3 ? 5 : 1} $edges={edges} $rail={rail}>
      {COLS[i] === "K" && r === 26 && <Selection />}
      {COLS[i] === "M" && r === 24 && <CellText $h={16} $size={12} $weight={400} $color="#ff0000" $kind="spill">;</CellText>}
    </Cell>
  );
};

const range = (a: number, b: number) => Array.from({ length: b - a }, (_, k) => a + k);

const SheetRow = ({ r }: { r: number }) => (
  <tr style={{ height: rowHeight(r) }}>
    <RowHead scope="row" $on={r === 26}>{r}</RowHead>
    {r === 1 && (
      <Cell colSpan={8} $edges={{ b: PURPLE }} $bottom="#ffffe0">
        <CellText $h={25} $size={24} $weight={400}>주    간    식    단    표</CellText>
      </Cell>
    )}
    {sideCell(r)}
    {MENU[r] && range(0, 7).map((i) => menuCell(r, i))}
    {r === 27 && (
      <Cell colSpan={7} $bg="#eaf1dd" $right="#fff" $bottom="#fff" $edges={{ l: BLACK, r: BLACK, b: BLACK }}>
        <CellText $h={16} $size={14}>{"* 고혈압- 저염식      당뇨식- 잡곡밥 *           * 상기  식단은  시장수급사정에  따라  달라질수  있습니다."}</CellText>
      </Cell>
    )}
    {range(r > 27 ? 0 : 8, COLS.length).map((i) => plainCell(r, i))}
  </tr>
);

const Big = ({ w, icon, a, b, caret, active }: { w: number; icon: React.ReactNode; a: string; b?: string; caret?: boolean; active?: boolean }) => (
  <BigButton $w={w} $active={active}>
    <IconBox>{icon}</IconBox>
    <Line>{a}</Line>
    <Line>{b}{caret && <Caret />}</Line>
  </BigButton>
);
const Check = ({ id, text, on, off }: { id: string; text: string; on?: boolean; off?: boolean }) => (
  <CheckLabel htmlFor={id} $off={off}><CheckBox id={id} type="checkbox" defaultChecked={on} disabled={off} />{text}</CheckLabel>
);

export default function App() {
  return (
    <Window>
      <Global />
      <TitleBar>
        <QuickAccess>
          <QuickPill>
            <QuickButton aria-label="저장"><SaveIcon /></QuickButton>
            <QuickButton aria-label="실행 취소"><UndoIcon /><Caret /></QuickButton>
            <QuickButton aria-label="다시 실행"><UndoIcon off /><Caret c="#a7b6cc" /></QuickButton>
          </QuickPill>
          <QuickMore aria-label="빠른 실행 도구 모음 사용자 지정">
            <svg width="7" height="8"><path d="M0 1h7" stroke="#1f3f7a" strokeWidth="1.500" /><path d="M0 4h7L3.500 8z" fill="#1f3f7a" /></svg>
          </QuickMore>
        </QuickAccess>
        <Title>2019년 11월식단표 <span>- Microsoft Excel</span></Title>
        <WindowButtons $gap={26} $end={13}>
          <button aria-label="최소화"><MinIcon /></button>
          <button aria-label="복원"><RestoreIcon /></button>
          <button aria-label="닫기"><CloseIcon /></button>
        </WindowButtons>
      </TitleBar>
      <OfficeButton aria-label="Office 단추"><OfficeLogo /></OfficeButton>
      <TabBar>
        {["홈", "삽입", "페이지 레이아웃", "수식", "데이터", "검토", "보기"].map((t) => (
          <Tab key={t} $active={t === "보기"}>{t}</Tab>
        ))}
        <WindowButtons $gap={13} $end={6}>
          <button aria-label="도움말"><HelpIcon /></button>
          <button aria-label="통합 문서 최소화"><MinIcon /></button>
          <button aria-label="통합 문서 복원"><RestoreIcon /></button>
          <button aria-label="통합 문서 닫기"><CloseIcon /></button>
        </WindowButtons>
      </TabBar>
      <Ribbon>
        <RibbonPanel>
          <Group $w={291}>
            <GroupBody>
              <Big w={42} active icon={<NormalIcon />} a="기본" />
              <Big w={52} icon={<PageLayoutIcon />} a="페이지" b="레이아웃" />
              <Big w={82} icon={<PageBreakIcon />} a="페이지 나누기" b="미리 보기" />
              <Divider />
              <Big w={56} icon={<CustomIcon />} a="사용자" b="지정 보기" />
              <Big w={42} icon={<FullIcon />} a="전체" b="화면" />
            </GroupBody>
            <GroupTitle>통합 문서 보기</GroupTitle>
          </Group>
          <Group $w={205}>
            <GroupBody>
              <CheckGrid>
                <Check id="ruler" text="눈금자" on off />
                <Check id="formula" text="수식 입력줄" on />
                <Check id="gridlines" text="눈금선" on />
                <Check id="headings" text="머리글" on />
                <Check id="message" text="메시지 표시줄" off />
              </CheckGrid>
            </GroupBody>
            <GroupTitle>표시/숨기기</GroupTitle>
          </Group>
          <Group $w={165}>
            <GroupBody>
              <Big w={56} icon={<Lens />} a="확대/축소" />
              <Big w={44} icon={<HundredIcon />} a="100%" />
              <Big w={56} icon={<SelZoomIcon />} a="선택 영역" b="확대/축소" />
            </GroupBody>
            <GroupTitle>확대/축소</GroupTitle>
          </Group>
          <Group $w={460}>
            <GroupBody>
              <Big w={40} icon={<NewWinIcon />} a="새 창" />
              <Big w={44} icon={<ArrangeIcon />} a="모두" b="정렬" />
              <Big w={44} icon={<FreezeIcon />} a="틀" b="고정" caret />
              <SmallStack $w={87}>
                <SmallButton><MiniWin kind="split" />나누기</SmallButton>
                <SmallButton><MiniWin kind="hide" />숨기기</SmallButton>
                <SmallButton $off disabled><MiniWin kind="off" />숨기기 취소</SmallButton>
              </SmallStack>
              <Divider />
              <SmallStack $w={122}>
                <SmallButton $off disabled><PairIcon kind="pair" />나란히 보기</SmallButton>
                <SmallButton $off disabled><PairIcon kind="sync" />동시 스크롤</SmallButton>
                <SmallButton $off disabled><PairIcon kind="reset" />창 위치 다시 정렬</SmallButton>
              </SmallStack>
              <Divider />
              <Big w={56} icon={<SaveAreaIcon />} a="작업 영역" b="저장" />
              <Big w={44} icon={<SwitchIcon />} a="창" b="전환" caret />
            </GroupBody>
            <GroupTitle>창</GroupTitle>
          </Group>
          <Group $w={48}>
            <GroupBody>
              <Big w={40} icon={<MacroIcon />} a="매크로" b="" caret />
            </GroupBody>
            <GroupTitle>매크로</GroupTitle>
          </Group>
        </RibbonPanel>
      </Ribbon>
      <FormulaBar>
        <NameBox aria-label="이름 상자" defaultValue="K26" />
        <NameArrow aria-label="이름 목록"><Caret c="#000" w={7} /></NameArrow>
        <FxCapsule aria-label="함수 삽입"><Dot /><Fx>fx</Fx></FxCapsule>
        <FormulaInput aria-label="수식 입력줄" />
        <ExpandButton aria-label="수식 입력줄 확장">
          <svg width="8" height="9" fill="none" stroke="#000" strokeWidth="1.500"><path d="M1 1l3 3 3-3M1 5l3 3 3-3" /></svg>
        </ExpandButton>
      </FormulaBar>
      <Work>
        <SheetView>
          <Sheet>
            <colgroup>
              <col style={{ width: 23 }} />
              {COLS.map((c, i) => <col key={i} style={{ width: colWidth(i) }} />)}
            </colgroup>
            <thead>
              <tr>
                <Corner aria-label="모두 선택" />
                {COLS.map((c, i) => <ColHead key={i} scope="col" $on={c === "K"}>{c}</ColHead>)}
              </tr>
            </thead>
            <tbody>{range(1, 42).map((r) => <SheetRow key={r} r={r} />)}</tbody>
          </Sheet>
        </SheetView>
        <VScroll>
          <SplitV />
          <ArrowButton aria-label="위로"><Tri dir={-90} c="#3c4a6b" /></ArrowButton>
          <VTrack><VThumb><Grip v /></VThumb></VTrack>
          <ArrowButton aria-label="아래로"><Tri dir={90} c="#3c4a6b" /></ArrowButton>
        </VScroll>
      </Work>
      <SheetBar>
        <NavArrows>
          <button aria-label="첫 시트"><Tri dir={180} bar /></button>
          <button aria-label="이전 시트"><Tri dir={180} /></button>
          <button aria-label="다음 시트"><Tri dir={0} /></button>
          <button aria-label="마지막 시트"><Tri dir={0} bar /></button>
        </NavArrows>
        <SheetTabs>
          <SheetTab $w={68}>11월1주</SheetTab>
          <SheetTab $w={68} $active>11월2주</SheetTab>
          <SheetTab $w={68}>11월3주</SheetTab>
          <SheetTab $w={35} aria-label="시트 삽입"><NewSheetIcon /></SheetTab>
        </SheetTabs>
        <HScroll>
          <SplitH />
          <ArrowButton aria-label="왼쪽으로"><Tri dir={180} c="#3c4a6b" /></ArrowButton>
          <HTrack><HThumb><Grip /></HThumb></HTrack>
          <ArrowButton aria-label="오른쪽으로"><Tri dir={0} c="#3c4a6b" /></ArrowButton>
          <SplitH />
        </HScroll>
        <BarEnd />
      </SheetBar>
      <StatusBar>
        <Ready>준비</Ready>
        <StatusTools>
          <Views>
            <ViewButton $on aria-label="기본"><svg width="13" height="10"><path d="M0 0h13v10H0z" fill="#fff" /><path d="M.5 .5h12v9H.5zM4.500 0v10M8.500 0v10M0 3.500h13M0 6.500h13" stroke="#5b5b5b" fill="none" /></svg></ViewButton>
            <ViewButton aria-label="페이지 레이아웃"><svg width="13" height="12"><path d="M1 1h11v10H1z" fill="#e8e8e8" stroke="#777" strokeWidth="2" /><path d="M4.500 3.500h4v5h-4z" fill="#fff" stroke="#666" /></svg></ViewButton>
            <ViewButton aria-label="페이지 나누기 미리 보기"><svg width="13" height="12"><path d="M1 1h11v10H1z" fill="#9a9a9a" stroke="#777" strokeWidth="2" /><path d="M2 0h3v6H2zM6 0h3v6H6z" fill="#fff" /></svg></ViewButton>
          </Views>
          <Percent>75%</Percent>
          <ZoomButton aria-label="축소"><Circle /></ZoomButton>
          <ZoomRange type="range" aria-label="확대/축소" min={0} max={100} defaultValue={36} />
          <ZoomButton aria-label="확대"><Circle plus /></ZoomButton>
        </StatusTools>
      </StatusBar>
      <TaskBar>
        <TaskButton $w={54} aria-label="시작"><StartOrb /></TaskButton>
        <TaskButton $w={54} $gap={6} $open aria-label="Internet Explorer"><IeIcon /></TaskButton>
        <StackEdge />
        <TaskButton $w={60} $gap={2} $open aria-label="Windows 탐색기"><FolderIcon /></TaskButton>
        <TaskButton $w={64} aria-label="Chrome"><ChromeIcon /></TaskButton>
        <TaskButton $w={60} $open aria-label="Excel"><ExcelIcon /></TaskButton>
        <Tray>
          <Ime><GlobeIcon /><span>가</span><span>漢</span></Ime>
          <svg width="9" height="5"><path d="M0 5h9L4.500 0z" fill="#fff" /></svg>
          <FlagIcon />
          <NetIcon />
          <SoundIcon />
          <Clock>오후 1:22<br />2019-11-11</Clock>
          <ShowDesktop aria-label="바탕 화면 보기" />
        </Tray>
      </TaskBar>
    </Window>
  );
}
